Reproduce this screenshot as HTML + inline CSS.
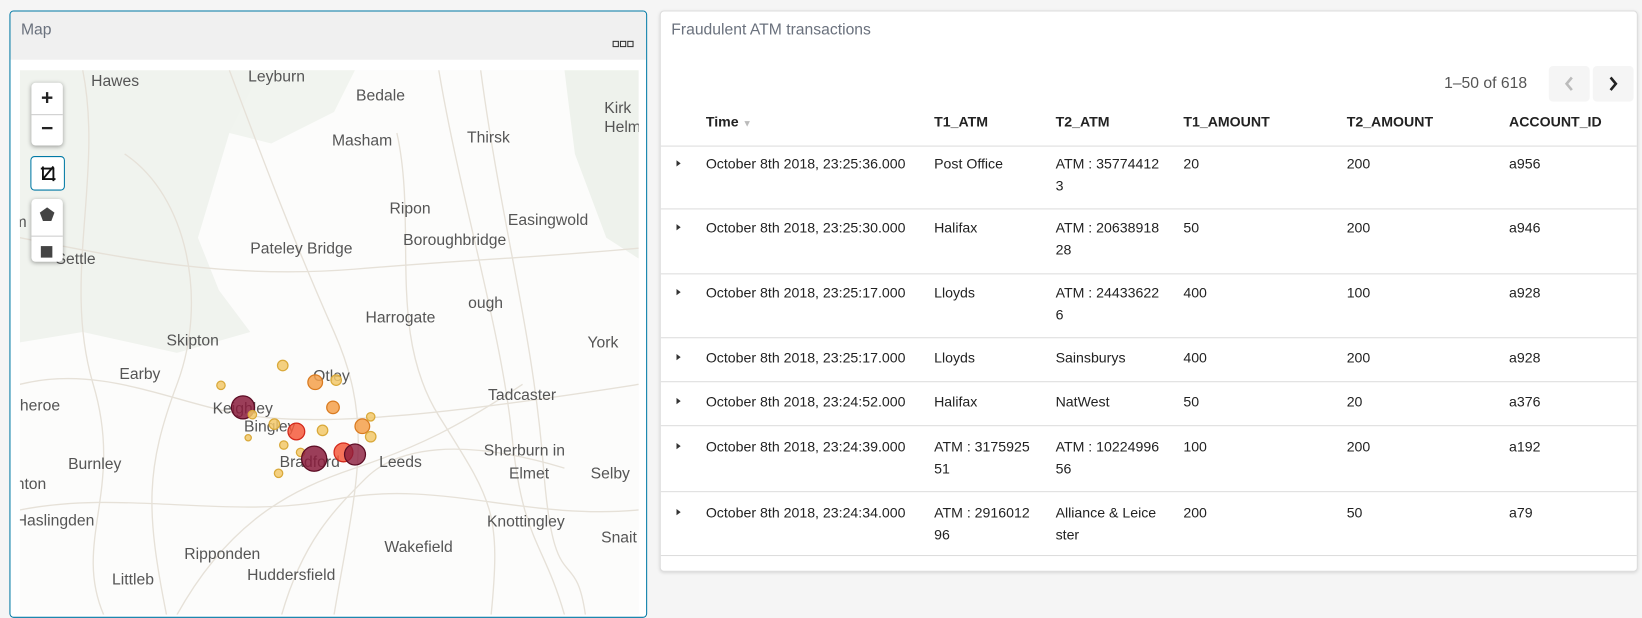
<!DOCTYPE html>
<html><head><meta charset="utf-8"><style>
html,body{margin:0;padding:0;width:1642px;height:576px;overflow:hidden;background:#f5f5f5;font-family:"Liberation Sans",sans-serif;}
#w{position:absolute;left:0;top:0;width:1568px;height:550px;transform:scale(1.0472);transform-origin:0 0;}
.p{position:absolute;box-sizing:border-box;}
#lp{left:9px;top:10px;width:609px;height:580px;border:1px solid #0079a5;border-radius:4px;background:#fff;overflow:hidden;}
#lh{position:absolute;left:0;top:0;right:0;height:46px;background:#f0f0f0;}
#lh .t{position:absolute;left:10px;top:9px;font-size:15px;color:#6a717d;}
#dots{position:absolute;right:12px;top:21px;}
#dots i{display:inline-block;width:4px;height:4px;border:1px solid #333;margin-left:1px;}
#map{position:absolute;left:9px;top:56px;width:591px;height:520px;background:#fcfcfb;overflow:hidden;}
.lb{position:absolute;font-size:15px;color:#555;white-space:nowrap;}
.ctl{position:absolute;left:11px;background:#fff;border-radius:4px;box-shadow:0 1px 4px rgba(0,0,0,.35);width:30px;}
.ctl div{height:30px;text-align:center;line-height:30px;font-size:20px;font-weight:bold;color:#222;}
#rp{left:630px;top:10px;width:934px;height:536px;background:#fff;border:1px solid #ddd;border-radius:4px;box-shadow:0 1px 3px rgba(0,0,0,.12);}
#rp .t{position:absolute;left:10px;top:9px;font-size:15px;color:#6a717d;}
.pg{position:absolute;top:60px;left:748px;font-size:15px;color:#555;}
.btn{position:absolute;top:52px;width:39px;height:34px;border-radius:4px;background:#f5f5f5;}
.c{position:absolute;font-size:13.5px;color:#222;line-height:21px;}
.h{position:absolute;font-size:13.5px;color:#222;font-weight:bold;}
.ln{position:absolute;left:0;right:0;height:1px;background:#ddd;}
.ar{position:absolute;left:15px;width:0;height:0;border-left:4px solid #333;border-top:3.5px solid transparent;border-bottom:3.5px solid transparent;}
</style></head><body><div id="w">
<div class="p" id="lp">
<div id="lh"><div class="t">Map</div><div id="dots"><i></i><i></i><i></i></div></div>
<div id="map">
<svg width="591" height="520" style="position:absolute;left:0;top:0">
<path d="M0 0 L230 0 L250 30 L200 60 L185 110 L170 160 L190 210 L220 250 L150 270 L60 250 L0 260Z" fill="#f0f3ee"/>
<path d="M230 0 L320 0 L300 40 L240 70 L200 60Z" fill="#f1f4ef"/>
<path d="M520 0 L591 0 L591 180 L560 160 L530 80Z" fill="#eef2ec"/>
<g stroke="#e6e1d8" stroke-width="1.3" fill="none">
<path d="M0 300 C80 280 150 320 220 330 S400 330 591 300"/>
<path d="M60 0 C80 100 40 200 70 300 S50 450 80 520"/>
<path d="M400 0 C420 120 460 250 470 350 S500 450 520 520"/>
<path d="M440 0 C460 150 490 250 500 380 S530 450 540 520"/>
<path d="M0 420 C100 400 200 430 300 410 S480 430 591 420"/>
<path d="M200 0 C230 80 260 160 300 250 S320 400 300 520"/>
<path d="M0 160 C100 180 200 200 320 190 S480 180 591 170"/>
<path d="M150 520 C200 430 260 400 320 380 S420 340 480 300"/>
<path d="M360 60 C380 150 350 250 400 330 S460 420 450 520"/>
<path d="M100 80 C160 120 180 220 150 300 S120 420 140 520"/>
<path d="M250 520 C270 450 300 420 330 390 S420 350 520 380"/>
</g>
</svg>
<div class="lb" style="left:68px;top:2px">Hawes</div>
<div class="lb" style="left:218px;top:-2px">Leyburn</div>
<div class="lb" style="left:321px;top:16px">Bedale</div>
<div class="lb" style="left:298px;top:59px">Masham</div>
<div class="lb" style="left:427px;top:56px">Thirsk</div>
<div class="lb" style="left:558px;top:28px">Kirk</div>
<div class="lb" style="left:558px;top:46px">Helmsle</div>
<div class="lb" style="left:353px;top:124px">Ripon</div>
<div class="lb" style="left:466px;top:135px">Easingwold</div>
<div class="lb" style="left:220px;top:162px">Pateley Bridge</div>
<div class="lb" style="left:366px;top:154px">Boroughbridge</div>
<div class="lb" style="left:34px;top:172px">Settle</div>
<div class="lb" style="left:-6px;top:137px">m</div>
<div class="lb" style="left:330px;top:228px">Harrogate</div>
<div class="lb" style="left:428px;top:214px">ough</div>
<div class="lb" style="left:140px;top:250px">Skipton</div>
<div class="lb" style="left:542px;top:252px">York</div>
<div class="lb" style="left:95px;top:282px">Earby</div>
<div class="lb" style="left:447px;top:302px">Tadcaster</div>
<div class="lb" style="left:0px;top:312px">heroe</div>
<div class="lb" style="left:184px;top:315px">Keighley</div>
<div class="lb" style="left:214px;top:332px">Bingley</div>
<div class="lb" style="left:280px;top:284px">Otley</div>
<div class="lb" style="left:443px;top:355px">Sherburn in</div>
<div class="lb" style="left:467px;top:377px">Elmet</div>
<div class="lb" style="left:545px;top:377px">Selby</div>
<div class="lb" style="left:46px;top:368px">Burnley</div>
<div class="lb" style="left:248px;top:366px">Bradford</div>
<div class="lb" style="left:343px;top:366px">Leeds</div>
<div class="lb" style="left:-4px;top:387px">nton</div>
<div class="lb" style="left:-4px;top:422px">Haslingden</div>
<div class="lb" style="left:446px;top:423px">Knottingley</div>
<div class="lb" style="left:555px;top:438px">Snait</div>
<div class="lb" style="left:348px;top:447px">Wakefield</div>
<div class="lb" style="left:157px;top:454px">Ripponden</div>
<div class="lb" style="left:217px;top:474px">Huddersfield</div>
<div class="lb" style="left:88px;top:478px">Littleb</div>
<svg width="591" height="520" style="position:absolute;left:0;top:0">
<g transform="translate(-19,-66)" stroke-width="1.2">
<circle cx="270" cy="348" r="5" fill="#f2c86a" fill-opacity=".85" stroke="#d9a93a"/>
<circle cx="211" cy="367" r="4" fill="#f2c86a" fill-opacity=".85" stroke="#d9a93a"/>
<circle cx="301" cy="364" r="7" fill="#f5a04a" fill-opacity=".85" stroke="#d97b20"/>
<circle cx="321" cy="362" r="5" fill="#f2c86a" fill-opacity=".85" stroke="#d9a93a"/>
<circle cx="318" cy="388" r="6" fill="#f5a04a" fill-opacity=".85" stroke="#d97b20"/>
<circle cx="232" cy="388" r="11" fill="#8a1c3c" fill-opacity=".85" stroke="#5c0c24"/>
<circle cx="241" cy="395" r="4" fill="#f2c86a" fill-opacity=".85" stroke="#d9a93a"/>
<circle cx="262" cy="404" r="5" fill="#f2c86a" fill-opacity=".85" stroke="#d9a93a"/>
<circle cx="283" cy="411" r="8" fill="#f45a3c" fill-opacity=".85" stroke="#d3281b"/>
<circle cx="308" cy="410" r="5" fill="#f2c86a" fill-opacity=".85" stroke="#d9a93a"/>
<circle cx="346" cy="406" r="7" fill="#f5a04a" fill-opacity=".85" stroke="#d97b20"/>
<circle cx="354" cy="397" r="4" fill="#f2c86a" fill-opacity=".85" stroke="#d9a93a"/>
<circle cx="354" cy="416" r="5" fill="#f2c86a" fill-opacity=".85" stroke="#d9a93a"/>
<circle cx="237" cy="417" r="3" fill="#f2c86a" fill-opacity=".85" stroke="#d9a93a"/>
<circle cx="271" cy="424" r="4" fill="#f2c86a" fill-opacity=".85" stroke="#d9a93a"/>
<circle cx="287" cy="431" r="4" fill="#f2c86a" fill-opacity=".85" stroke="#d9a93a"/>
<circle cx="300" cy="437" r="12" fill="#8a1c3c" fill-opacity=".85" stroke="#5c0c24"/>
<circle cx="328" cy="431" r="9" fill="#f45a3c" fill-opacity=".85" stroke="#d3281b"/>
<circle cx="339" cy="433" r="10" fill="#8a1c3c" fill-opacity=".8" stroke="#5c0c24"/>
<circle cx="266" cy="451" r="4" fill="#f2c86a" fill-opacity=".85" stroke="#d9a93a"/>
</g></svg>
<div class="ctl" style="top:12px;height:60px"><div>+</div><div style="border-top:1px solid #ccc;height:29px;line-height:27px">−</div></div>
<div class="ctl" style="top:82px;left:10px;width:31px;height:31px;border:1px solid #0079a5;box-shadow:none">
<svg width="31" height="31" viewBox="0 0 31 31"><path d="M11 9v12h12M9 11h12v12M21 9l-10 12" stroke="#111" stroke-width="1.8" fill="none"/></svg></div>
<div class="ctl" style="top:123px;height:60px">
<svg width="30" height="30"><path d="M15 8l7 5-3 8h-8l-3-8z" fill="#444"/></svg>
<div style="border-top:1px solid #ccc;height:29px"><svg width="30" height="29"><rect x="9" y="9" width="11" height="11" fill="#444"/></svg></div></div>
</div>
</div>
<div class="p" id="rp">
<div class="t">Fraudulent ATM transactions</div>
<div class="pg">1–50 of 618</div>
<div class="btn" style="left:848px"><svg width="39" height="34"><path d="M22 11l-5 6 5 6" stroke="#bbb" stroke-width="2.5" fill="none"/></svg></div>
<div class="btn" style="left:890px"><svg width="39" height="34"><path d="M17 11l5 6-5 6" stroke="#222" stroke-width="2.5" fill="none"/></svg></div>
<div class="h" style="left:43px;top:98px">Time <span style="color:#bbb;font-size:9px">▼</span></div>
<div class="h" style="left:261px;top:98px">T1_ATM</div>
<div class="h" style="left:377px;top:98px">T2_ATM</div>
<div class="h" style="left:499px;top:98px">T1_AMOUNT</div>
<div class="h" style="left:655px;top:98px">T2_AMOUNT</div>
<div class="h" style="left:810px;top:98px">ACCOUNT_ID</div>
<div class="ln" style="top:128px"></div>
<div class="ln" style="top:188px"></div>
<div class="ln" style="top:250px"></div>
<div class="ln" style="top:311px"></div>
<div class="ln" style="top:353px"></div>
<div class="ln" style="top:395px"></div>
<div class="ln" style="top:458px"></div>
<div class="ln" style="top:519px"></div>

<div class="ar" style="top:142px"></div>
<div class="c" style="left:43px;top:135px">October 8th 2018, 23:25:36.000</div><div class="c" style="left:261px;top:135px">Post Office</div><div class="c" style="left:377px;top:135px">ATM : 35774412<br>3</div><div class="c" style="left:499px;top:135px">20</div><div class="c" style="left:655px;top:135px">200</div><div class="c" style="left:810px;top:135px">a956</div>

<div class="ar" style="top:203px"></div>
<div class="c" style="left:43px;top:196px">October 8th 2018, 23:25:30.000</div><div class="c" style="left:261px;top:196px">Halifax</div><div class="c" style="left:377px;top:196px">ATM : 20638918<br>28</div><div class="c" style="left:499px;top:196px">50</div><div class="c" style="left:655px;top:196px">200</div><div class="c" style="left:810px;top:196px">a946</div>

<div class="ar" style="top:265px"></div>
<div class="c" style="left:43px;top:258px">October 8th 2018, 23:25:17.000</div><div class="c" style="left:261px;top:258px">Lloyds</div><div class="c" style="left:377px;top:258px">ATM : 24433622<br>6</div><div class="c" style="left:499px;top:258px">400</div><div class="c" style="left:655px;top:258px">100</div><div class="c" style="left:810px;top:258px">a928</div>

<div class="ar" style="top:327px"></div>
<div class="c" style="left:43px;top:320px">October 8th 2018, 23:25:17.000</div><div class="c" style="left:261px;top:320px">Lloyds</div><div class="c" style="left:377px;top:320px">Sainsburys</div><div class="c" style="left:499px;top:320px">400</div><div class="c" style="left:655px;top:320px">200</div><div class="c" style="left:810px;top:320px">a928</div>

<div class="ar" style="top:369px"></div>
<div class="c" style="left:43px;top:362px">October 8th 2018, 23:24:52.000</div><div class="c" style="left:261px;top:362px">Halifax</div><div class="c" style="left:377px;top:362px">NatWest</div><div class="c" style="left:499px;top:362px">50</div><div class="c" style="left:655px;top:362px">20</div><div class="c" style="left:810px;top:362px">a376</div>

<div class="ar" style="top:412px"></div>
<div class="c" style="left:43px;top:405px">October 8th 2018, 23:24:39.000</div><div class="c" style="left:261px;top:405px">ATM : 3175925<br>51</div><div class="c" style="left:377px;top:405px">ATM : 10224996<br>56</div><div class="c" style="left:499px;top:405px">100</div><div class="c" style="left:655px;top:405px">200</div><div class="c" style="left:810px;top:405px">a192</div>

<div class="ar" style="top:475px"></div>
<div class="c" style="left:43px;top:468px">October 8th 2018, 23:24:34.000</div><div class="c" style="left:261px;top:468px">ATM : 2916012<br>96</div><div class="c" style="left:377px;top:468px">Alliance &amp; Leice<br>ster</div><div class="c" style="left:499px;top:468px">200</div><div class="c" style="left:655px;top:468px">50</div><div class="c" style="left:810px;top:468px">a79</div>
</div>
</div></body></html>
